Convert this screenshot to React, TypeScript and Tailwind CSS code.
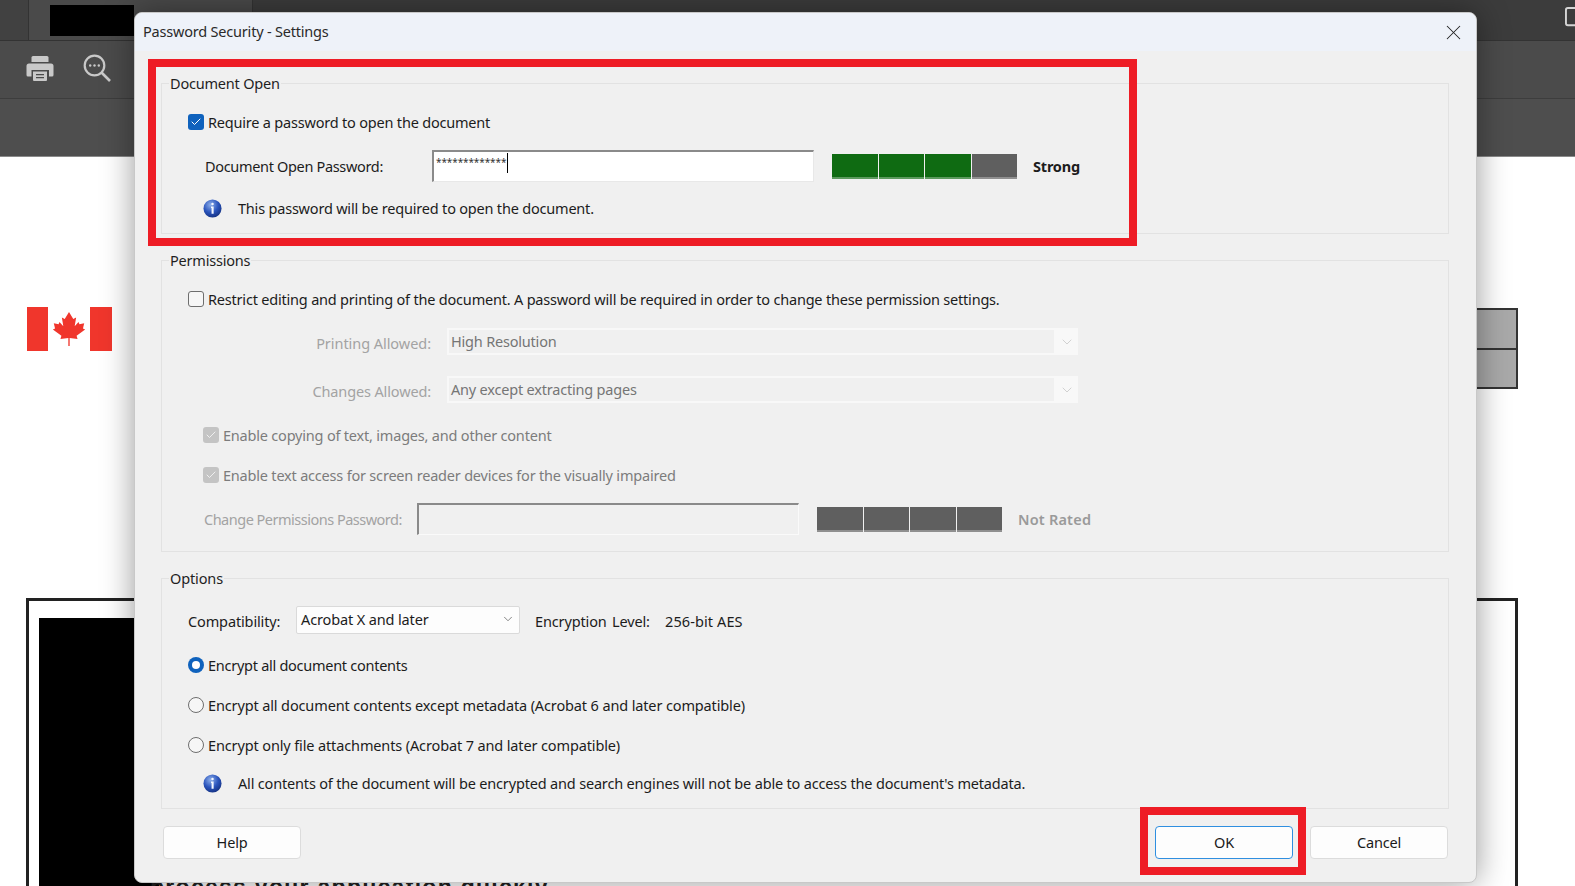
import { Check, ChevronDown, X } from "lucide-react";

function CheckBox({ checked, disabled }: { checked?: boolean; disabled?: boolean }) {
  if (disabled) {
    return (
      <span className="grid size-4 shrink-0 place-items-center rounded-[3px] bg-[#c4c4c4]">
        <Check className="size-3 text-[#f0f0f0]" strokeWidth={2} />
      </span>
    );
  }
  if (checked) {
    return (
      <span className="grid size-4 shrink-0 place-items-center rounded-[3px] bg-[#0f62bd]">
        <Check className="size-3 text-white" strokeWidth={2} />
      </span>
    );
  }
  return <span className="size-4 shrink-0 rounded-[3px] border border-[#6e6e6e] bg-[#f6f6f6]" />;
}

function Radio({ checked }: { checked?: boolean }) {
  return checked ? (
    <span className="grid size-4 shrink-0 place-items-center rounded-full bg-[#0f62bd]">
      <span className="size-2 rounded-full bg-white" />
    </span>
  ) : (
    <span className="size-4 shrink-0 rounded-full border border-[#6e6e6e] bg-[#f6f6f6]" />
  );
}

function InfoIcon() {
  return (
    <svg viewBox="0 0 20 20" className="size-[19px] shrink-0">
      <defs>
        <radialGradient id="info-ball" cx="40%" cy="30%" r="75%">
          <stop offset="0%" stopColor="#8fb0ea" />
          <stop offset="55%" stopColor="#2b55bd" />
          <stop offset="100%" stopColor="#14307f" />
        </radialGradient>
      </defs>
      <circle cx="10" cy="10" r="9.5" fill="url(#info-ball)" />
      <circle cx="10" cy="5.2" r="1.3" fill="#f4f7ff" />
      <path d="M8.4 8h2.8v7.4h-2.2V9.4H8.4z" fill="#f4f7ff" />
    </svg>
  );
}

function StrengthBar({ filled }: { filled: number }) {
  return (
    <div className="flex h-[25px] w-[185px] gap-px">
      {[0, 1, 2, 3].map((i) => (
        <div
          key={i}
          className={
            i < filled
              ? "flex-1 border-b-2 border-[#5c9a5e] bg-[#0f6b12]"
              : "flex-1 border-b-2 border-[#8f8f8f] bg-[#5f5f5f]"
          }
        />
      ))}
    </div>
  );
}

function DisabledSelect({ value }: { value: string }) {
  return (
    <div className="flex h-[27px] w-[631px] border-2 border-[#f8f8f8]">
      <div className="flex-1 pl-[2px] leading-[22px] text-[#757575]">{value}</div>
      <div className="grid w-[22px] place-items-center bg-[#f8f8f8] pl-[3px]">
        <ChevronDown className="size-4 text-[#bdbdbd]" strokeWidth={1} />
      </div>
    </div>
  );
}

function Btn({ label, focus }: { label: string; focus?: boolean }) {
  return (
    <button
      type="button"
      className={
        focus
          ? "h-[33px] w-[138px] rounded-[4px] border border-[#2f8fe0] bg-[#fdfdfd] pb-[2px] text-[#1a1a1a]"
          : "h-[33px] w-[138px] rounded-[4px] border border-[#dcdcdc] bg-[#fdfdfd] pb-[2px] text-[#1a1a1a]"
      }
    >
      {label}
    </button>
  );
}

function Dialog() {
  return (
    <div className="absolute left-[134px] top-[12px] flex h-[871px] w-[1343px] flex-col overflow-hidden rounded-[8px] border border-[#c8c8c8] bg-[#f0f0f0] shadow-[0_0_32px_rgba(0,0,0,0.4)]">
      <div className="flex h-[38px] shrink-0 items-center justify-between bg-[#eef2f9] pl-[8px] pr-[10px]">
        <span className="pb-[3px] text-[#2a2a2a]">Password Security - Settings</span>
        <X className="size-[25px] text-[#222]" strokeWidth={1} />
      </div>

      <div className="flex flex-col pl-[26px] pr-[27px] pt-[22px]">
        <fieldset className="h-[161px] border border-[#e2e2e2]">
          <legend className="ml-[7px] h-[20px] px-px text-[#1f1f1f]">Document Open</legend>
          <div className="ml-[26px] mt-[19px] flex h-[20px] items-center gap-[4px]">
            <CheckBox checked />
            <span>Require a password to open the document</span>
          </div>
          <div className="mt-[18px] flex items-center">
            <span className="ml-[43px] w-[227px] tracking-[-0.33px]">Document Open Password:</span>
            <div className="h-[32px] w-[382px] border-t-2 border-l-2 border-t-[#8a8a8a] border-l-[#8a8a8a] border-r border-b border-r-[#e8e8e8] border-b-[#e8e8e8] bg-white">
              <div className="flex h-[21px] items-center pl-[2px] text-[10px] leading-[21px] tracking-[-0.1px] text-[#333]">
                *************
                <span className="ml-[1px] h-[20px] w-px bg-black" />
              </div>
            </div>
            <div className="ml-[18px]">
              <StrengthBar filled={3} />
            </div>
            <span className="ml-[16px] font-bold">Strong</span>
          </div>
          <div className="mt-[16px] flex h-[20px] items-center">
            <span className="ml-[41px] w-[35px]">
              <InfoIcon />
            </span>
            <span>This password will be required to open the document.</span>
          </div>
        </fieldset>

        <fieldset className="mt-[16px] h-[302px] border border-[#e2e2e2]">
          <legend className="ml-[7px] h-[20px] px-px text-[#1f1f1f]">Permissions</legend>
          <div className="ml-[26px] mt-[19px] flex h-[20px] items-center gap-[4px]">
            <CheckBox />
            <span>Restrict editing and printing of the document. A password will be required in order to change these permission settings.</span>
          </div>
          <div className="mt-[19px] flex items-center">
            <span className="w-[269px] pt-[3px] text-right tracking-[-0.05px] text-[#a3a3a3]">Printing Allowed:</span>
            <div className="ml-[16px]">
              <DisabledSelect value="High Resolution" />
            </div>
          </div>
          <div className="mt-[21px] flex items-center">
            <span className="w-[269px] pt-[3px] text-right tracking-[-0.13px] text-[#a3a3a3]">Changes Allowed:</span>
            <div className="ml-[16px]">
              <DisabledSelect value="Any except extracting pages" />
            </div>
          </div>
          <div className="ml-[41px] mt-[22px] flex h-[20px] items-center gap-[4px] text-[#7c7c7c]">
            <CheckBox disabled />
            <span>Enable copying of text, images, and other content</span>
          </div>
          <div className="ml-[41px] mt-[20px] flex h-[20px] items-center gap-[4px] text-[#7c7c7c]">
            <CheckBox disabled />
            <span>Enable text access for screen reader devices for the visually impaired</span>
          </div>
          <div className="mt-[18px] flex items-center">
            <span className="ml-[42px] w-[213px] tracking-[-0.5px] text-[#a3a3a3]">Change Permissions Password:</span>
            <div className="h-[32px] w-[382px] border-t-2 border-l-2 border-t-[#8a8a8a] border-l-[#8a8a8a] border-r border-b border-r-[#fafafa] border-b-[#fafafa]" />
            <div className="ml-[18px]">
              <StrengthBar filled={0} />
            </div>
            <span className="ml-[16px] font-semibold tracking-[0.2px] text-[#9a9a9a]">Not Rated</span>
          </div>
        </fieldset>

        <fieldset className="mt-[16px] h-[241px] border border-[#e2e2e2] tracking-[-0.13px]">
          <legend className="ml-[7px] h-[20px] px-px text-[#1f1f1f]">Options</legend>
          <div className="mt-[18px] flex items-center">
            <span className="ml-[26px] w-[108px] pt-[2px]">Compatibility:</span>
            <div className="flex h-[28px] w-[224px] items-center justify-between rounded-[2px] border border-[#dadada] bg-[#fdfdfd] pb-[3px] pl-[4px] pr-[4px]">
              <span>Acrobat X and later</span>
              <ChevronDown className="size-[14px] text-[#555]" strokeWidth={1.2} />
            </div>
            <span className="ml-[15px] w-[77px] pt-[1px]">Encryption</span>
            <span className="w-[53px] pt-[1px]">Level:</span>
            <span className="pt-[1px] tracking-[0.1px]">256-bit AES</span>
          </div>
          <div className="ml-[26px] mt-[21px] flex h-[20px] items-center gap-[4px]">
            <Radio checked />
            <span className="tracking-[-0.27px]">Encrypt all document contents</span>
          </div>
          <div className="ml-[26px] mt-[20px] flex h-[20px] items-center gap-[4px]">
            <Radio />
            <span>Encrypt all document contents except metadata (Acrobat 6 and later compatible)</span>
          </div>
          <div className="ml-[26px] mt-[20px] flex h-[20px] items-center gap-[4px]">
            <Radio />
            <span>Encrypt only file attachments (Acrobat 7 and later compatible)</span>
          </div>
          <div className="mt-[18px] flex h-[20px] items-center">
            <span className="ml-[41px] w-[35px]">
              <InfoIcon />
            </span>
            <span className="tracking-[-0.175px]">All contents of the document will be encrypted and search engines will not be able to access the document's metadata.</span>
          </div>
        </fieldset>

        <div className="ml-[2px] mr-[1px] mt-[17px] flex items-center">
          <Btn label="Help" />
          <div className="ml-auto flex gap-[17px]">
            <Btn label="OK" focus />
            <Btn label="Cancel" />
          </div>
        </div>
      </div>
    </div>
  );
}

export default function App() {
  return (
    <div className="relative h-[886px] w-[1575px] overflow-hidden bg-white font-['Noto_Sans',sans-serif] text-[14.5px] leading-[20px] tracking-[-0.2px] text-[#1c1c1c]">
      {/* acrobat window behind the dialog */}
      <div className="flex h-[41px] border-b border-[#333]">
        <div className="w-[29px] border-r border-[#333] bg-[#414141]" />
        <div className="w-[224px] border-r border-[#333] bg-[#4a4a4a] pt-[5px]">
          <div className="ml-[21px] h-[31px] w-[84px] bg-black" />
        </div>
        <div className="flex flex-1 justify-end overflow-hidden bg-[#3c3c3c] pt-[7px]">
          <svg viewBox="0 0 26 26" className="mr-[-15px] size-[25px] shrink-0" fill="none" stroke="#d4d4d4" strokeWidth="2">
            <path d="M3 1h20a2 2 0 0 1 2 2v14a2 2 0 0 1-2 2h-7l-4 5v-5H3a2 2 0 0 1-2-2V3a2 2 0 0 1 2-2z" />
          </svg>
        </div>
      </div>
      <div className="flex h-[58px] items-center gap-[29px] border-b border-[#3d3d3d] bg-[#4b4b4b] pb-[3px] pl-[26px]">
        <svg viewBox="0 0 28 28" className="size-[28px]" fill="#c9c9c9">
          <path d="M7 2h14a1.5 1.5 0 0 1 1.5 1.5V8h-17V3.500A1.500 1.500 0 0 1 7 2z" />
          <path d="M3 9.500h22a2.500 2.500 0 0 1 2.500 2.500v9a1.500 1.500 0 0 1-1.500 1.500h-3V16H5.500v6.500H2A1.500 1.500 0 0 1 .5 21v-9A2.500 2.500 0 0 1 3 9.500z" />
          <path d="M7 17.500h14V26a1 1 0 0 1-1 1H8a1 1 0 0 1-1-1z" />
          <path d="M10 20h8v1.300h-8zM10 23h8v1.300h-8z" fill="#4b4b4b" />
        </svg>
        <svg viewBox="0 0 28 28" className="size-[28px]" fill="none" stroke="#c9c9c9" strokeWidth="2.200">
          <circle cx="11.500" cy="11.500" r="9.800" />
          <path d="M18.500 18.500 27 27" strokeWidth="2.600" />
          <circle cx="7.200" cy="11.500" r="1.200" fill="#c9c9c9" stroke="none" />
          <circle cx="11.500" cy="11.500" r="1.200" fill="#c9c9c9" stroke="none" />
          <circle cx="15.800" cy="11.500" r="1.200" fill="#c9c9c9" stroke="none" />
        </svg>
      </div>
      <div className="h-[58px] border-b border-[#8a8a8a] bg-[#4e4e4e]" />

      {/* page content, placed freely on the document canvas */}
      <div className="absolute left-[27px] top-[307px] flex h-[44px] w-[85px] items-center justify-between">
        <div className="h-full w-[21px] bg-[#f0362c]" />
        <svg viewBox="0 0 40 40" className="size-[38px]" fill="#f0362c">
          <path d="M19.300 38v-8.500l-8.300 1 1-3.500L3 20.500l2.300-1-1.300-5.500 5 1 1-2.500 4 4.500-1.500-9 3 1.500L20 2l4.500 7.500 3-1.500-1.500 9 4-4.500 1 2.500 5-1-1.300 5.500 2.300 1L28 27l1 3.500-8.300-1V38z" />
        </svg>
        <div className="h-full w-[22px] bg-[#f0362c]" />
      </div>
      <div className="absolute left-[1469px] top-[308px] flex h-[81px] w-[49px] flex-col border-2 border-[#333] bg-[#a9a9a9]">
        <div className="flex-1 border-b-2 border-[#333]" />
        <div className="flex-1" />
      </div>
      <div className="absolute left-[26px] top-[598px] h-[320px] w-[1492px] border-[3px] border-[#222] bg-white">
        <div className="ml-[10px] mt-[17px] h-[300px] w-[120px] bg-black" />
      </div>
      <div className="absolute left-[150px] top-[875px] whitespace-nowrap font-['Liberation_Sans',sans-serif] text-[23px] font-bold leading-[24px] tracking-[1.28px] text-[#222]">
        process your application quickly
      </div>

      <Dialog />

      {/* red callouts */}
      <div className="absolute left-[148px] top-[59px] h-[187px] w-[989px] border-[8px] border-[#ee1c25]" />
      <div className="absolute left-[1140px] top-[807px] h-[68px] w-[166px] border-[8px] border-[#ee1c25]" />
    </div>
  );
}
